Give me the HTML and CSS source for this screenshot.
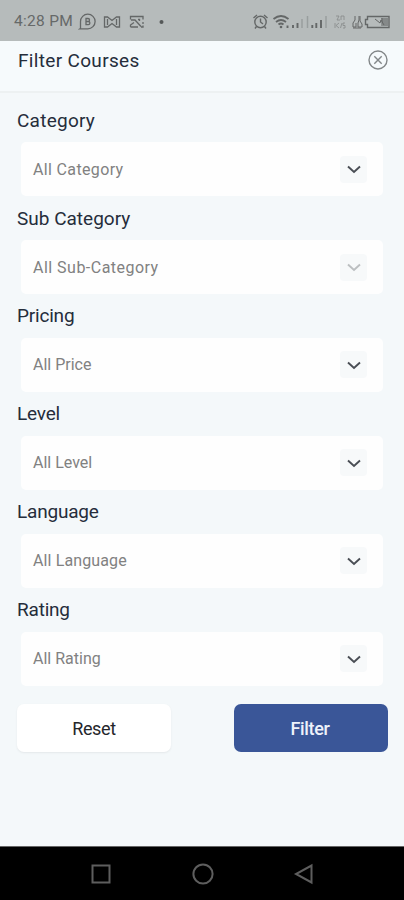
FILE: index.html
```
<!DOCTYPE html>
<html lang="en">
<head>
<meta charset="utf-8">
<title>Filter Courses</title>
<link rel="stylesheet" href="styles.css">
</head>
<body>
<div class="status">
  <span class="time">4:28 PM</span>
  <svg class="status-left" width="92" height="20" viewBox="0 0 92 20" fill="none" stroke="#646767" stroke-width="1.3">
    <path d="M2.500 17.500V10.500a7.300 7.300 0 1 1 7.300 7.300H2z"/><path d="M8 7.500h2a1.500 1.500 0 0 1 0 3H8zM8 10.500h2.300a1.600 1.600 0 0 1 0 3.200H8z"/>
    <path d="M26.500 16V6h3l4.500 3.500L38.500 6h3v10h-3l-4.500-3.500-4.500 3.500zM29.500 8v6M38.500 8v6"/>
    <path d="M65 8.500V5.500H52.500v3M52.500 16h7.500M65 11v2M65 14.500V16h-2M53 9h4l6 6.500M52.500 16v-2l3.500-2.500M60 8.500h1.500v1.500"/>
    <circle cx="83.500" cy="11" r="2" fill="#555858" stroke="none"/>
  </svg>
  <svg class="status-right" width="140" height="20" viewBox="0 0 140 20" fill="none" stroke="#646767" stroke-width="1.4">
    <g transform="translate(-1 0)"><circle cx="10.500" cy="11" r="5.700"/><path d="M10.500 7.500V11l2.500 2M3.500 7l3.500-3M14 4l3.500 3M6.500 15.500l-1.500 2M14.500 15.500l1.500 2"/></g>
    <path d="M22.500 8q7.500-6 15 0M25 11q5-4 10 0M27.500 13.500q2.500-2 5 0" stroke-width="1.800"/><circle cx="30" cy="16" r="1.300" fill="#626565" stroke="none"/>
    <path d="M36.500 14.500v2.500M42 14v3M46.500 12v5M61.300 14v3M65.300 12v5M70 9v8" stroke-width="1.900"/>
    <path d="M51 8v9M56.500 5v12M75 5v12" stroke="#999e9e" stroke-width="1.500"/>
    <path d="M85 5h3l-2 4h3M90 5v4M90 5h3v4M84 12v5M88 12l-3 2.500 3 2.500M89.500 17l1.500-5M94 12h-2v2.500h2V17h-2" stroke="#858989" stroke-width=".8"/>
    <path d="M104 5v4l-2 3v4h3v-4M108 5v4l-1 3v4h4v-3l-2-3V5M102 17h8" stroke-width="1"/>
    <path d="M116.500 5.500h21.500v11h-21.500v-3h-2v-5h2z"/><path d="M130 7h7v8h-5z" fill="#858989" stroke="none"/><path d="M124 8l5 4 1-3 3 5M131 7v8" stroke-width="1"/>
  </svg>
</div>
<header class="header">
  <h1>Filter Courses</h1>
  <svg class="close" width="22" height="22" viewBox="0 0 22 22" fill="none" stroke="#838789" stroke-width="1.400"><circle cx="11" cy="11" r="9"/><path d="M7.300 7.300l7.400 7.400M14.700 7.300l-7.400 7.400"/></svg>
</header>
<main class="form">
  <section class="field"><h2 class="w-category">Category</h2><div class="select"><span class="v-category">All Category</span><i class="arrow"><svg width="16" height="16" viewBox="0 0 16 16"><path d="M2 5.500L8 11l6-5.500"/></svg></i></div></section>
  <section class="field"><h2>Sub Category</h2><div class="select"><span class="v-sub">All Sub-Category</span><i class="arrow disabled"><svg width="16" height="16" viewBox="0 0 16 16"><path d="M2 5.500L8 11l6-5.500"/></svg></i></div></section>
  <section class="field"><h2 class="tight">Pricing</h2><div class="select"><span>All Price</span><i class="arrow"><svg width="16" height="16" viewBox="0 0 16 16"><path d="M2 5.500L8 11l6-5.500"/></svg></i></div></section>
  <section class="field"><h2 class="tight">Level</h2><div class="select"><span>All Level</span><i class="arrow"><svg width="16" height="16" viewBox="0 0 16 16"><path d="M2 5.500L8 11l6-5.500"/></svg></i></div></section>
  <section class="field"><h2 class="tight">Language</h2><div class="select"><span class="v-language">All Language</span><i class="arrow"><svg width="16" height="16" viewBox="0 0 16 16"><path d="M2 5.500L8 11l6-5.500"/></svg></i></div></section>
  <section class="field"><h2 class="tight">Rating</h2><div class="select"><span>All Rating</span><i class="arrow"><svg width="16" height="16" viewBox="0 0 16 16"><path d="M2 5.500L8 11l6-5.500"/></svg></i></div></section>
  <div class="actions"><button class="reset">Reset</button><button class="apply">Filter</button></div>
</main>
<nav class="nav">
  <svg width="22" height="22" viewBox="0 0 22 22"><rect x="2.500" y="2.500" width="17" height="17"/></svg>
  <svg width="22" height="22" viewBox="0 0 22 22"><circle cx="11" cy="11" r="9.600"/></svg>
  <svg width="22" height="22" viewBox="0 0 22 22"><path d="M18.500 2.500v17L3 11z"/></svg>
</nav>
</body>
</html>
```
FILE: styles.css
```
* { box-sizing: border-box; }
body { margin: 0; width: 404px; height: 900px; display: flex; flex-direction: column; background: #f4f8fa; font-family: Roboto, "Liberation Sans", sans-serif; overflow: hidden; }
.status { height: 41px; flex: none; background: #b6bbbb; display: flex; align-items: center; padding: 0 13px 0 14px; }
.time { width: 64px; font-size: 15.5px; color: #666969; white-space: nowrap; letter-spacing: .3px; }
.status-right { margin-left: auto; }
.header { height: 52px; flex: none; background: #f6fafc; border-bottom: 2px solid #edf1f2; padding: 8px 15px 0 18px; display: flex; justify-content: space-between; align-items: flex-start; }
h1, h2 { margin: 0; font-weight: 400; color: #252d3b; font-size: 19px; line-height: 24px; white-space: nowrap; }
h1 { letter-spacing: .33px; }
.w-category { letter-spacing: .25px; }
.tight { letter-spacing: -.2px; }
.v-category { letter-spacing: .35px; }
.v-sub { letter-spacing: .48px; }
.v-language { letter-spacing: .12px; }
.form { flex: 1; padding: 15.65px 16px 0 17px; }
.field { height: 97.9px; }
.select { height: 54px; margin: 9.55px 5px 0 4px; border-radius: 5px; background: #fefefe; display: flex; align-items: center; justify-content: space-between; padding: 0 16px 0 12px; color: #818181; font-size: 16px; }
.arrow { width: 27px; height: 27px; background: #f7f9fa; border-radius: 4px; display: flex; align-items: center; justify-content: center; }
.arrow path { fill: none; stroke: #4a4e55; stroke-width: 1.9; }
.arrow.disabled path { stroke: #bcbfc1; }
.actions { display: flex; justify-content: space-between; margin-top: 8.3px; }
button { width: 154px; height: 48px; border: 0; border-radius: 7px; font: 500 18px Roboto, sans-serif; padding: 0; letter-spacing: -.35px; }
.reset { background: #fff; color: #24262b; box-shadow: 0 1px 2px #e4e8ea; font-weight: 400; }
.apply { background: #3a5698; color: #eef2fb; padding-right: 2px; }
.nav { height: 54px; flex: none; background: #000; border-top: 1px solid #666; display: flex; align-items: center; justify-content: space-between; padding: 0 89px 0 90px; }
.nav svg { fill: none; stroke: #5e5e5e; stroke-width: 2; }
```
